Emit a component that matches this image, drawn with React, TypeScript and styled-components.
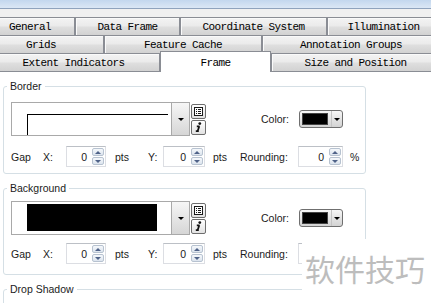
import styled, { createGlobalStyle } from 'styled-components';

const GlobalStyle = createGlobalStyle`
  html, body {
    margin: 0;
    padding: 0;
    background: #fff;
  }
  body {
    font-family: "Liberation Sans", Arial, sans-serif;
    color: #1b1b1b;
  }
`;

type TabDef = { label: string; w: number; active?: boolean };

const tabRows: { offset: number; tabs: TabDef[] }[] = [
  {
    offset: -15,
    tabs: [
      { label: 'General', w: 90 },
      { label: 'Data Frame', w: 105 },
      { label: 'Coordinate System', w: 147 },
      { label: 'Illumination', w: 113 },
    ],
  },
  {
    offset: -22,
    tabs: [
      { label: 'Grids', w: 126 },
      { label: 'Feature Cache', w: 158 },
      { label: 'Annotation Groups', w: 178 },
    ],
  },
  {
    offset: -13,
    tabs: [
      { label: 'Extent Indicators', w: 173 },
      { label: 'Frame', w: 111, active: true },
      { label: 'Size and Position', w: 169 },
    ],
  },
];

function ListIcon() {
  return (
    <svg width="9" height="9" viewBox="0 0 9 9">
      <rect x="0.5" y="0.5" width="8" height="8" fill="#fff" stroke="#1a1a1a" />
      <path d="M2 2.5h1M4 2.5h3M2 4.5h1M4 4.5h3M2 6.5h1M4 6.5h3" stroke="#1a1a1a" />
    </svg>
  );
}

function InfoIcon() {
  return (
    <svg width="9" height="10" viewBox="0 0 9 10">
      <circle cx="5.8" cy="1.6" r="1.4" fill="#111" />
      <path d="M5.3 4.2 L3.6 9.2 M2.8 4.3 h2.8 M1.8 9.2 h3" stroke="#111" strokeWidth="1.8" fill="none" />
    </svg>
  );
}

function Spin({ w }: { w: number }) {
  return (
    <SpinBox $w={w}>
      <SpinValue>0</SpinValue>
      <SpinButtons>
        <SpinBtn><ArrowUp /></SpinBtn>
        <SpinBtn><ArrowDown /></SpinBtn>
      </SpinButtons>
    </SpinBox>
  );
}

function StyleGroup({ title, filled, pad }: { title: string; filled?: boolean; pad: [number, number, number] }) {
  return (
    <Group $top={pad[0]} $bottom={pad[2]}>
      <Legend>{title}</Legend>
      <TopRow>
        <Picker>
          <PickerPreview>{filled ? <FillSample /> : <LineSample />}</PickerPreview>
          <DropButton><ArrowDownBlack /></DropButton>
        </Picker>
        <IconStack>
          <IconBtn><ListIcon /></IconBtn>
          <IconBtn><InfoIcon /></IconBtn>
        </IconStack>
        <Spacer />
        <Text>Color:</Text>
        <ColorButton>
          <Swatch />
          <ColorArrow><ArrowDownBlack /></ColorArrow>
        </ColorButton>
      </TopRow>
      <GapRow $mt={pad[1]}>
        <Text $w={32}>Gap</Text>
        <Text $w={23}>X:</Text>
        <Spin w={40} />
        <Text $w={33} $ml={9}>pts</Text>
        <Text $w={15}>Y:</Text>
        <Spin w={42} />
        <Text $w={27} $ml={8}>pts</Text>
        <Text $w={58}>Rounding:</Text>
        <Spin w={45} />
        <Text $ml={7}>%</Text>
      </GapRow>
    </Group>
  );
}

export default function App() {
  return (
    <>
      <GlobalStyle />
      <Page>
        <TitleStrip />
        <TabArea>
          {tabRows.map((row, i) => (
            <TabRow key={i} $offset={row.offset}>
              {row.tabs.map((t) => (
                <Tab key={t.label} $w={t.w} $active={t.active}>{t.label}</Tab>
              ))}
            </TabRow>
          ))}
        </TabArea>
        <Panel>
          <StyleGroup title="Border" pad={[9, 10, 6]} />
          <StyleGroup title="Background" filled pad={[6, 8, 10]} />
          <Group $top={6} $bottom={6}>
            <Legend>Drop Shadow</Legend>
            <ShadowBody />
          </Group>
        </Panel>
        <Watermark>软件技巧</Watermark>
      </Page>
    </>
  );
}

const Page = styled.div`
  position: relative;
  width: 431px;
  height: 303px;
  overflow: hidden;
  display: flex;
  flex-direction: column;
  background: #fff;
`;

const TitleStrip = styled.div`
  flex-shrink: 0;
  height: 8px;
  background: linear-gradient(#c3d7ee, #dbe7f5);
  border-bottom: 1px solid #8fa3bd;
`;

const TabArea = styled.div`
  flex-shrink: 0;
  background: #f0f0f0;
  padding-top: 8px;
  display: flex;
  flex-direction: column;
`;

const TabRow = styled.div<{ $offset: number }>`
  display: flex;
  flex-shrink: 0;
  height: 18px;
  margin-left: ${(p) => p.$offset}px;
`;

const Tab = styled.div<{ $w: number; $active?: boolean }>`
  flex: 0 0 ${(p) => p.$w}px;
  box-sizing: border-box;
  height: ${(p) => (p.$active ? 21 : 18)}px;
  margin-top: ${(p) => (p.$active ? -2 : 0)}px;
  padding-top: ${(p) => (p.$active ? 3 : 1)}px;
  border: 1px solid #8a8d94;
  border-bottom: none;
  background: ${(p) =>
    p.$active ? '#fff' : 'linear-gradient(#f3f3f3, #ebebeb 45%, #dedede 55%, #d2d2d2)'};
  box-shadow: ${(p) => (p.$active ? 'none' : 'inset 1px 1px 0 #fafafa')};
  position: ${(p) => (p.$active ? 'relative' : 'static')};
  z-index: ${(p) => (p.$active ? 2 : 'auto')};
  font-family: "Liberation Mono", "Courier New", monospace;
  font-size: 11px;
  letter-spacing: -0.6px;
  line-height: 16px;
  color: #000;
  text-align: center;
  white-space: nowrap;
`;

const Panel = styled.div`
  flex: 1 0 auto;
  background: #fff;
  border-top: 1px solid #8a8d94;
  padding: 8px 0 0 3px;
  display: flex;
  flex-direction: column;
  align-items: flex-start;
`;

const Group = styled.fieldset<{ $top: number; $bottom: number }>`
  flex-shrink: 0;
  width: 363px;
  box-sizing: border-box;
  margin: 0 0 8px;
  min-width: 0;
  border: 1px solid #d5dfe5;
  border-radius: 3px;
  padding: ${(p) => p.$top}px 22px ${(p) => p.$bottom}px 7px;
`;

const Legend = styled.legend`
  font-size: 10.5px;
  line-height: 13px;
  padding: 0 3px;
  margin-left: -4px;
  color: #1b1b1b;
`;

const TopRow = styled.div`
  display: flex;
  align-items: center;
  height: 34px;
`;

const Picker = styled.div`
  width: 179px;
  height: 34px;
  box-sizing: border-box;
  border: 1px solid #a9a9a9;
  background: #fff;
  display: flex;
`;

const PickerPreview = styled.div`
  flex: 1;
  overflow: hidden;
  display: flex;
  align-items: flex-start;
`;

const LineSample = styled.div`
  flex: 1;
  height: 40px;
  margin: 11px 3px 0 15px;
  border-top: 1px solid #000;
  border-left: 1px solid #000;
`;

const FillSample = styled.div`
  width: 130px;
  height: 27px;
  margin: 2px 0 0 15px;
  background: #000;
`;

const DropButton = styled.div`
  width: 17px;
  border-left: 1px solid #a9a9a9;
  background: linear-gradient(#f6f6f6, #e6e6e6 50%, #d6d6d6);
  display: flex;
  align-items: center;
  justify-content: center;
`;

const ArrowDownBlack = styled.span`
  width: 0;
  height: 0;
  border-left: 3px solid transparent;
  border-right: 3px solid transparent;
  border-top: 3px solid #000;
`;

const IconStack = styled.div`
  display: flex;
  flex-direction: column;
  gap: 1px;
  margin-left: 1px;
`;

const IconBtn = styled.div`
  width: 15px;
  height: 15px;
  box-sizing: border-box;
  border: 1px solid #6e6e6e;
  border-radius: 2px;
  background: linear-gradient(#ffffff, #e2e2e2);
  display: flex;
  align-items: center;
  justify-content: center;
`;

const Spacer = styled.div`
  flex: 1;
`;

const Text = styled.span<{ $w?: number; $ml?: number }>`
  font-size: 10.5px;
  color: #1b1b1b;
  white-space: nowrap;
  ${(p) => (p.$w ? `flex: 0 0 ${p.$w}px;` : '')}
  margin-left: ${(p) => p.$ml ?? 0}px;
`;

const ColorButton = styled.div`
  width: 44px;
  height: 18px;
  box-sizing: border-box;
  margin-left: 10px;
  border: 1px solid #6f6f6f;
  border-radius: 3px;
  background: linear-gradient(#f7f7f7, #e4e4e4 50%, #d3d3d3);
  display: flex;
  align-items: center;
  padding-left: 2px;
`;

const Swatch = styled.div`
  width: 26px;
  height: 12px;
  box-sizing: border-box;
  background: #000;
  border: 1px solid #444;
`;

const ColorArrow = styled.div`
  flex: 1;
  align-self: stretch;
  margin-left: 3px;
  border-left: 1px solid #c4c4c4;
  display: flex;
  align-items: center;
  justify-content: center;
`;

const GapRow = styled.div<{ $mt: number }>`
  display: flex;
  align-items: center;
  height: 21px;
  margin-top: ${(p) => p.$mt}px;
`;

const SpinBox = styled.div<{ $w: number }>`
  flex: 0 0 ${(p) => p.$w}px;
  height: 21px;
  box-sizing: border-box;
  border: 1px solid #dcdee3;
  border-top-color: #bcc0c6;
  background: #fff;
  display: flex;
  align-items: center;
  justify-content: flex-end;
  padding: 1px;
`;

const SpinValue = styled.span`
  font-size: 10.5px;
  margin-right: 5px;
  color: #1b1b1b;
`;

const SpinButtons = styled.div`
  display: flex;
  flex-direction: column;
  gap: 1px;
  width: 12px;
  height: 100%;
`;

const SpinBtn = styled.div`
  flex: 1;
  box-sizing: border-box;
  border: 1px solid #b7c2d0;
  border-radius: 2px;
  background: linear-gradient(#f5f8fb, #dce4ee);
  display: flex;
  align-items: center;
  justify-content: center;
`;

const ArrowUp = styled.span`
  width: 0;
  height: 0;
  border-left: 3px solid transparent;
  border-right: 3px solid transparent;
  border-bottom: 3px solid #4f6288;
`;

const ArrowDown = styled.span`
  width: 0;
  height: 0;
  border-left: 3px solid transparent;
  border-right: 3px solid transparent;
  border-top: 3px solid #4f6288;
`;

const ShadowBody = styled.div`
  height: 30px;
`;

const Watermark = styled.div`
  position: absolute;
  left: 302px;
  top: 239px;
  width: 129px;
  height: 64px;
  box-sizing: border-box;
  padding: 14px 0 0 3px;
  background: #fff;
  font-family: "Noto Sans CJK SC", sans-serif;
  font-size: 30px;
  line-height: 30px;
  color: #bdbdbd;
  white-space: nowrap;
`;
